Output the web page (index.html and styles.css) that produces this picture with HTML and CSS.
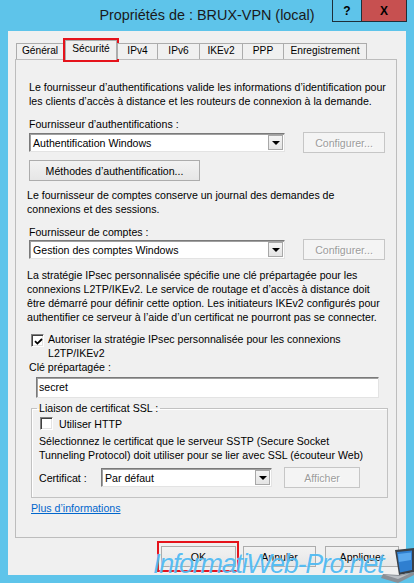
FILE: index.html
```html
<!DOCTYPE html>
<html lang="fr">
<head>
<meta charset="utf-8">
<title>Propriétés de : BRUX-VPN (local)</title>
<link rel="stylesheet" href="styles.css">
</head>
<body>
<div class="window">
  <div class="titlebar">
    <div></div>
    <div class="title">Propriétés de : BRUX-VPN (local)</div>
    <div class="caption">
      <span class="cb help">?</span>
      <span class="cb close">X</span>
    </div>
  </div>
  <div class="client">
    <div class="tabs">
      <div class="tab t-gen">Général</div>
      <div class="tab sel">Sécurité</div>
      <div class="tab t-v4">IPv4</div>
      <div class="tab t-v6">IPv6</div>
      <div class="tab t-ike">IKEv2</div>
      <div class="tab t-ppp">PPP</div>
      <div class="tab t-enr">Enregistrement</div>
    </div>
    <div class="panel">
      <p class="txt p1">Le fournisseur d’authentifications valide les informations d’identification pour<br>les clients d’accès à distance et les routeurs de connexion à la demande.</p>
      <div class="txt lbl1">Fournisseur d’authentifications :</div>
      <div class="row row1">
        <div class="combo c-wide"><span class="cval">Authentification Windows</span><span class="arrow"></span></div>
        <div class="btn disabled b-conf">Configurer...</div>
      </div>
      <div class="btn b-meth">Méthodes d’authentification...</div>
      <p class="txt p2">Le fournisseur de comptes conserve un journal des demandes de<br>connexions et des sessions.</p>
      <div class="txt lbl2">Fournisseur de comptes :</div>
      <div class="row row2">
        <div class="combo c-wide"><span class="cval">Gestion des comptes Windows</span><span class="arrow"></span></div>
        <div class="btn disabled b-conf">Configurer...</div>
      </div>
      <p class="txt p3">La stratégie IPsec personnalisée spécifie une clé prépartagée pour les<br>connexions L2TP/IKEv2. Le service de routage et d’accès à distance doit<br>être démarré pour définir cette option. Les initiateurs IKEv2 configurés pour<br>authentifier ce serveur à l’aide d’un certificat ne pourront pas se connecter.</p>
      <div class="chkrow chk1">
        <span class="chk checked"><svg viewBox="0 0 9 9" width="9" height="9"><path d="M1 4.2 L3.4 6.6 L8 2" fill="none" stroke="#000" stroke-width="1.8"/></svg></span>
        <span class="txt">Autoriser la stratégie IPsec personnalisée pour les connexions<br>L2TP/IKEv2</span>
      </div>
      <div class="txt lbl3">Clé prépartagée :</div>
      <div class="input">secret</div>
      <fieldset class="group">
        <legend>Liaison de certificat SSL :</legend>
        <div class="chkrow chk2">
          <span class="chk"></span>
          <span class="txt">Utiliser HTTP</span>
        </div>
        <p class="txt p4">Sélectionnez le certificat que le serveur SSTP (Secure Socket<br>Tunneling Protocol) doit utiliser pour se lier avec SSL (écouteur Web)</p>
        <div class="row row3">
          <span class="txt certlbl">Certificat :</span>
          <div class="combo c-cert"><span class="cval">Par défaut</span><span class="arrow"></span></div>
          <div class="btn disabled b-aff">Afficher</div>
        </div>
      </fieldset>
      <a class="link" href="#">Plus d’informations</a>
    </div>
    <div class="actions">
      <div class="btn b-ok">OK</div>
      <div class="btn b-ann">Annuler</div>
      <div class="btn b-app">Appliquer</div>
    </div>
  </div>
  <div class="watermark">InformatiWeb-Pro.net</div>
  <svg class="laptop" viewBox="0 0 33 35" width="33" height="35">
    <polygon points="14,2 33,0 33,24 18,27" fill="#3a4048"/>
    <polygon points="16,4 31,2.5 31,22 19,24.5" fill="#2f7fd0"/>
    <polygon points="17,6 30,4.5 30,12 18,14" fill="#5aa8ee"/>
    <polygon points="2,26 18,27 33,24 33,27 17,35 0,30" fill="#8a8f96"/>
    <polygon points="4,27 18,28 29,25.5 17,31" fill="#b9bec4"/>
  </svg>
</div>
</body>
</html>
```

FILE: styles.css
```css
* { box-sizing: border-box; }
html, body { margin: 0; padding: 0; }
body {
  width: 414px;
  height: 583px;
  overflow: hidden;
  background: #5ec4ea;
  font-family: "Liberation Sans", Arial, sans-serif;
  font-size: 10.6px;
  color: #000;
}
.window {
  position: relative;
  width: 414px;
  height: 583px;
  display: flex;
  flex-direction: column;
}
.titlebar {
  height: 31px;
  display: grid;
  grid-template-columns: 1fr auto 1fr;
}
.title {
  font-size: 14.4px;
  line-height: 30px;
  color: #1a1a1a;
  white-space: nowrap;
}
.caption {
  justify-self: end;
  align-self: start;
  display: flex;
  margin-right: 7px;
}
.cb {
  height: 22px;
  border: 1px solid #1d2f3a;
  border-top: none;
  display: flex;
  align-items: center;
  justify-content: center;
  font-weight: bold;
  font-size: 12px;
  color: #000;
}
.help { width: 29px; border-right: none; }
.close { width: 46px; background: #c75050; }

.client {
  margin: 0 8px;
  height: 544px;
  background: #f0f0f0;
  padding: 7px 7px 0 7px;
  display: flex;
  flex-direction: column;
}
.tabs {
  display: flex;
  align-items: flex-end;
  height: 21px;
  padding-left: 1px;
  position: relative;
  z-index: 2;
  font-size: 10.2px;
}
.tab {
  height: 16px;
  border: 1px solid #acacac;
  border-bottom: none;
  background: #f0f0f0;
  text-align: center;
  line-height: 14px;
  margin-right: -1px;
  white-space: nowrap;
}
.t-gen { width: 48px; }
.tab.sel {
  width: 52px;
  height: 20px;
  margin-left: 2px;
  margin-right: 0;
  margin-bottom: -1px;
  line-height: 16px;
  background: #f0f0f0;
  outline: 2px solid #e5131b;
}
.t-v4 { width: 41px; }
.t-v6 { width: 43px; }
.t-ike { width: 44px; }
.t-ppp { width: 42px; }
.t-enr { width: 84px; }

.panel {
  width: 382px;
  height: 479px;
  border: 1px solid #bdbdbd;
  background: #f0f0f0;
  padding: 0 0 0 13px;
  display: flex;
  flex-direction: column;
  align-items: flex-start;
}
.txt { line-height: 14px; white-space: nowrap; }
p { margin: 0; }
.p1 { margin-top: 20px; }
.lbl1 { margin-top: 9px; }
.row {
  display: flex;
  align-items: center;
}
.row1 { margin-top: 1px; height: 21px; }
.b-meth { margin-top: 7px; width: 171px; }
.p2 { margin-top: 7px; margin-left: -2px; }
.lbl2 { margin-top: 9px; }
.row2 { margin-top: 0; height: 21px; }
.p3 { margin-top: 8px; margin-left: -2px; }
.chk1 { margin-top: 8px; margin-left: 2px; }
.lbl3 { margin-top: 0; }

.combo {
  position: relative;
  height: 19px;
  background: #fff;
  border: 1px solid;
  border-color: #7a7a7a #e3e3e3 #e3e3e3 #7a7a7a;
  box-shadow: inset 1px 1px 0 #a0a0a0;
  display: flex;
  align-items: center;
  padding-left: 3px;
  line-height: 14px;
}
.c-wide { width: 256px; }
.cval { flex: 1; white-space: nowrap; }
.arrow {
  width: 15px;
  height: 15px;
  margin-right: 1px;
  border: 1px solid #a8a8a8;
  background: linear-gradient(#f4f4f4, #e4e4e4);
  position: relative;
}
.arrow::after {
  content: "";
  position: absolute;
  left: 3px;
  top: 5px;
  border-left: 4px solid transparent;
  border-right: 4px solid transparent;
  border-top: 4px solid #000;
}

.btn {
  height: 21px;
  border: 1px solid #acacac;
  background: linear-gradient(#f2f2f2, #e6e6e6);
  display: flex;
  align-items: center;
  justify-content: center;
  line-height: 14px;
  white-space: nowrap;
}
.btn.disabled {
  color: #9c9c9c;
  background: #f4f4f4;
  border-color: #c6c6c6;
  text-shadow: 1px 1px 0 #fff;
}
.b-conf { width: 82px; margin-left: 18px; }

.chkrow {
  display: flex;
  align-items: flex-start;
  gap: 4px;
}
.chk {
  width: 13px;
  height: 13px;
  margin-top: 2px;
  background: #fff;
  border: 1px solid;
  border-color: #808080 #fff #fff #808080;
  box-shadow: inset 1px 1px 0 #404040, inset -1px -1px 0 #e3e3e3;
  display: flex;
  align-items: center;
  justify-content: center;
}
.chk svg { margin: 1px 0 0 1px; }

.input {
  margin-top: 3px;
  margin-left: 7px;
  width: 343px;
  height: 21px;
  background: #fff;
  border: 1px solid;
  border-color: #7a7a7a #e3e3e3 #e3e3e3 #7a7a7a;
  box-shadow: inset 1px 1px 0 #a0a0a0;
  padding-left: 2px;
  line-height: 18px;
}

.group {
  margin: 3px 0 0 2px;
  width: 357px;
  min-width: 0;
  padding: 0 7px 9px 7px;
  border: 1px solid #c2c2c2;
  box-shadow: inset 1px 1px 0 #fff;
}
.group legend {
  padding: 0 2px;
  margin-left: -2px;
  line-height: 14px;
}
.chk2 { margin-top: 2px; margin-left: 1px; gap: 6px; }
.chk2 .chk { margin-top: 0; }
.p4 { margin-top: 3px; }
.row3 { margin-top: 5px; height: 21px; }
.certlbl { width: 62px; }
.c-cert { width: 171px; }
.b-aff { width: 76px; margin-left: 12px; }

.link {
  margin-top: 3px;
  margin-left: 2px;
  color: #0066cc;
  text-decoration: underline;
  line-height: 14px;
}

.actions {
  margin-top: 8px;
  display: flex;
  justify-content: flex-end;
}
.b-ok { width: 75px; position: relative; }
.b-ok::after {
  content: "";
  position: absolute;
  left: -5px;
  top: -6px;
  right: -4px;
  bottom: -6px;
  border: 2px solid #e5131b;
}
.b-ann { width: 73px; margin-left: 7px; }
.b-app { width: 74px; margin-left: 9px; }

.watermark {
  position: absolute;
  left: 153px;
  top: 549px;
  font-family: "Liberation Sans", Arial, sans-serif;
  font-style: italic;
  font-size: 27px;
  line-height: 30px;
  color: rgba(45, 172, 240, 0.78);
  text-shadow: 0 0 1px rgba(255,255,255,0.8);
  letter-spacing: -1.3px;
  white-space: nowrap;
}
.laptop {
  position: absolute;
  left: 381px;
  top: 548px;
}
```
